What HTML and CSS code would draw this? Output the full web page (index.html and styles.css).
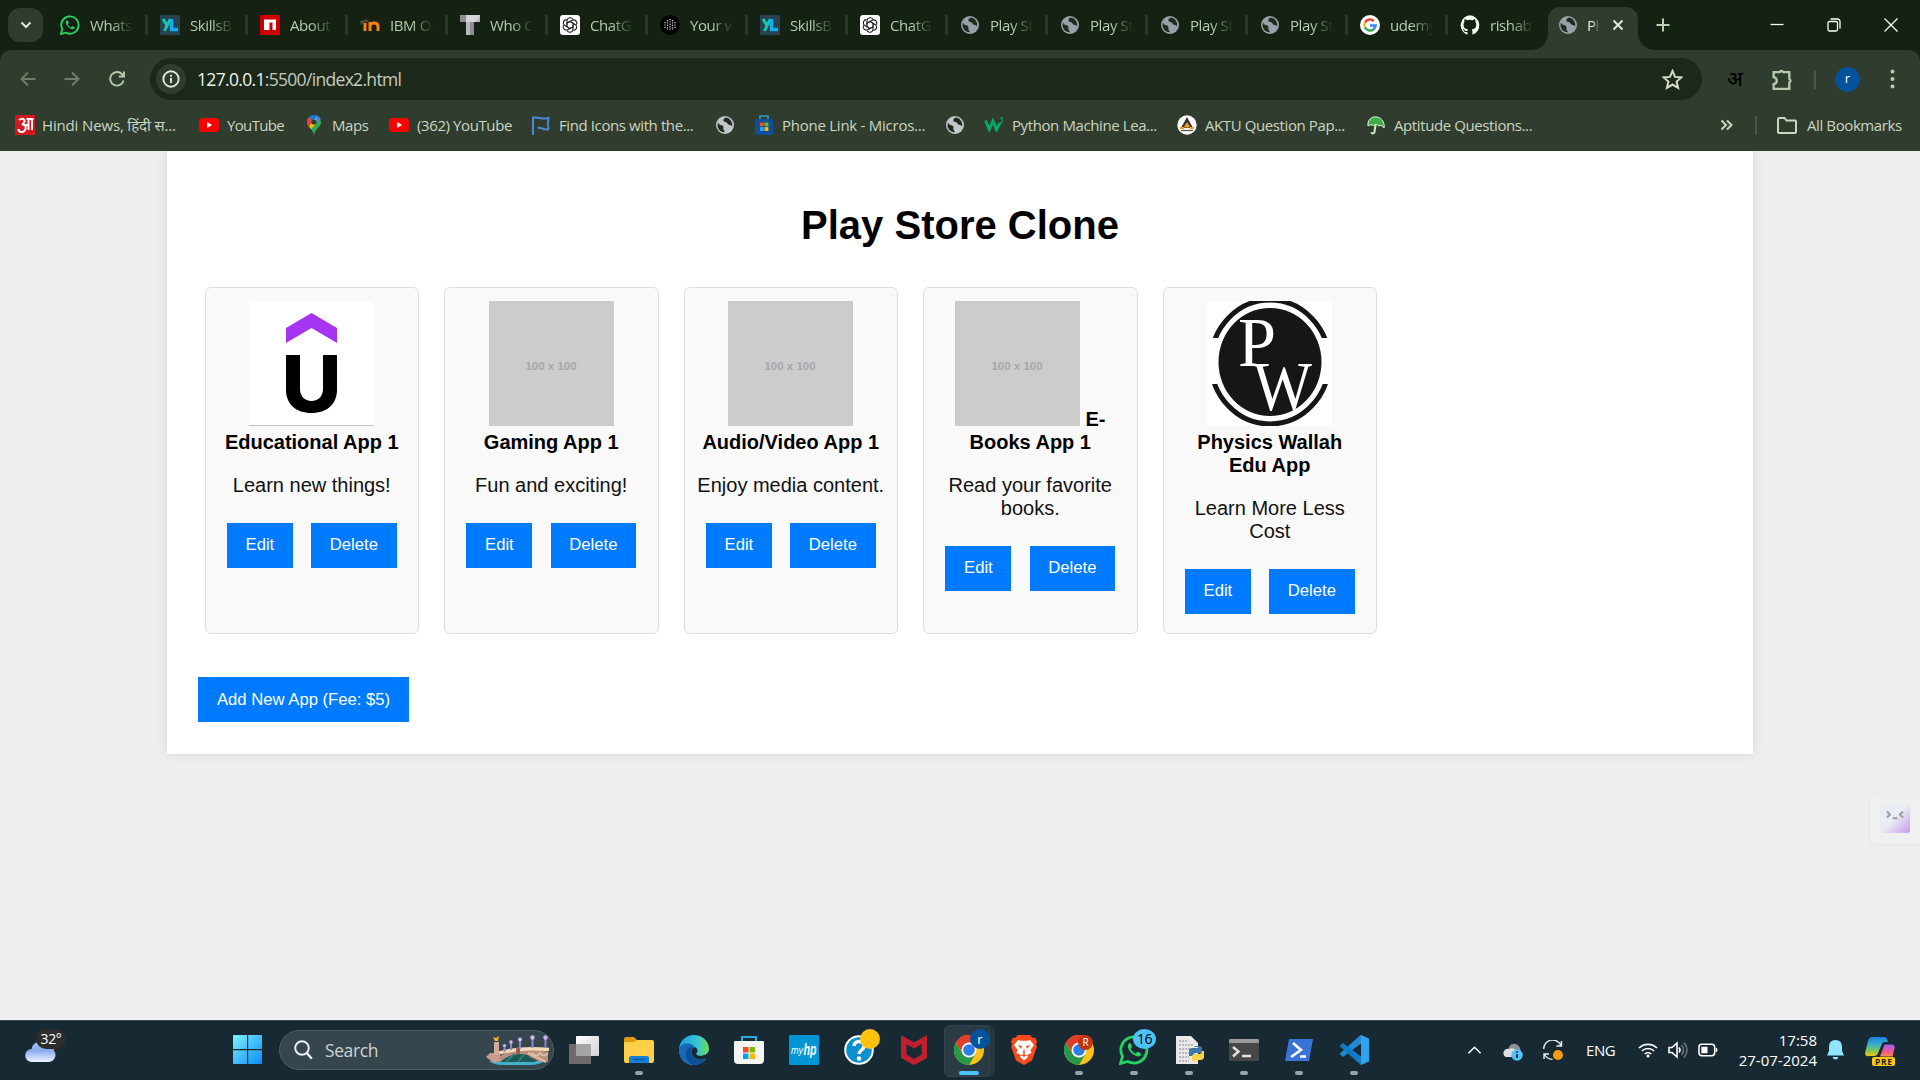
FILE: index.html
```
<!DOCTYPE html>
<html lang="en">
<head>
<meta charset="utf-8">
<title>Play Store Clone</title>
<link rel="stylesheet" href="styles.css">
</head>
<body>
<svg class="defs" aria-hidden="true">
  <defs>
    <symbol id="globe" viewBox="0 0 20 20"><circle cx="10" cy="10" r="9" fill="currentColor"/><path class="cut" d="M3 7.500c1.500 3.500 3.500 2 5 3.500 1.300 1.300-.5 2.500.8 4l1.200 2.200c-4.200.2-7.500-3-7.500-7.200zM10.500 2.600c-2 1.300-3 2.500-1.500 4 1.300 1.200 3 .2 3.500 2 .5 1.700 2.500 1.200 3.500 2l1.200.6c.6-4.500-2.700-8.500-6.700-8.600z"/></symbol>
    <symbol id="whatsapp" viewBox="0 0 30 30"><path d="M1.500 28.500l2-7.200A13 13 0 1 1 8.800 26.500z" fill="none" stroke="#25d366" stroke-width="2.800"/><path d="M10.500 8c-3.500 2.500-.8 7.500 2.500 10.500 3.300 2.900 8 4.500 9 .8.200-1.100-3.200-2.800-3.800-2.400l-1.600 1.700c-2.200-.8-4.300-2.800-5-4.800l1.300-1.800c.3-.7-1-4.100-2.400-4z" fill="#25d366"/></symbol>
    <symbol id="yl" viewBox="0 0 20 20"><rect width="20" height="20" rx="1" fill="#26414f"/><path d="M3 4l4 6.500 3.500-6.500" fill="none" stroke="#12c9b0" stroke-width="3"/><path d="M7.500 9.500L4.500 16" stroke="#12c9b0" stroke-width="2.800"/><path d="M11.500 4v10.500H18" fill="none" stroke="#13aef2" stroke-width="3.300"/></symbol>
    <symbol id="gpt" viewBox="0 0 20 20"><rect width="20" height="20" rx="3" fill="#fff"/><g fill="none" stroke="#202020" stroke-width="1.100"><path id="petal" d="M7 9.800V5.500a3.200 3.200 0 0 1 6-1.100M7 8.200l3.800-2.200"/><use href="#petal" transform="rotate(60 10 10)"/><use href="#petal" transform="rotate(120 10 10)"/><use href="#petal" transform="rotate(180 10 10)"/><use href="#petal" transform="rotate(240 10 10)"/><use href="#petal" transform="rotate(300 10 10)"/></g></symbol>
    <symbol id="youtube" viewBox="0 0 20 20"><rect y="3" width="20" height="14" rx="3.500" fill="#f00"/><path d="M8 7l5.200 3L8 13z" fill="#fff"/></symbol>
    <symbol id="chrome" viewBox="0 0 30 30"><circle cx="15" cy="15" r="15" fill="#fbc116"/><path d="M2 7.500A15 15 0 0 0 15 30l6.500-11.300L15 15 8.500 18.700z" fill="#279847"/><path d="M2 7.500A15 15 0 0 1 28 7.500H15L8.500 18.700z" fill="#e33b2e"/><circle cx="15" cy="15" r="7.500" fill="#fff"/><circle cx="15" cy="15" r="5.800" fill="#2f7de9"/></symbol>
    <linearGradient id="win" x2="1" y2="1"><stop stop-color="#7ff0ff"/><stop offset="1" stop-color="#0a8cf5"/></linearGradient>
    <linearGradient id="edgeA" x2="1"><stop stop-color="#1e9fe0"/><stop offset=".6" stop-color="#35c4d8"/><stop offset="1" stop-color="#6be04f"/></linearGradient>
    <linearGradient id="cloud" x2="0" y2="1"><stop stop-color="#a9c4f5"/><stop offset=".4" stop-color="#86a8ee"/><stop offset="1" stop-color="#eef3ff"/></linearGradient>
    <linearGradient id="copA" x2="0" y2="1"><stop stop-color="#1a7fe0"/><stop offset=".4" stop-color="#35b0c8"/><stop offset=".75" stop-color="#8fc64a"/><stop offset="1" stop-color="#f2c51a"/></linearGradient>
    <linearGradient id="copB" x2="0" y2="1"><stop stop-color="#a65cf0"/><stop offset=".6" stop-color="#f0568c"/><stop offset="1" stop-color="#fb8a4a"/></linearGradient>
    <linearGradient id="tview" x2="1" y2="1"><stop stop-color="#fff"/><stop offset="1" stop-color="#d2d2d2"/></linearGradient>
  </defs>
</svg>

<header class="browser">
  <div class="tabstrip">
    <button class="tab-search" aria-label="Search tabs"><svg width="12" height="8" viewBox="0 0 12 8"><path d="M1.500 1.500L6 6l4.500-4.500" class="ln-bright"/></svg></button>
    <div class="tab"><svg class="fav"><use href="#whatsapp"/></svg><span>WhatsApp</span></div>
    <div class="tab"><svg class="fav"><use href="#yl"/></svg><span>SkillsBuild</span></div>
    <div class="tab"><svg class="fav" viewBox="0 0 20 20"><rect width="20" height="20" fill="#c00"/><path d="M4 4.500h12V15h-3.500V7.500H9.500V15H4z" fill="#fff"/></svg><span>About npm</span></div>
    <div class="tab"><svg class="fav" viewBox="0 0 20 20"><path d="M5 16V8" fill="none" stroke="#f98012" stroke-width="3"/><path d="M10 16V7M10 11c0-4 8-4 8 .5V16" fill="none" stroke="#f98012" stroke-width="3"/><path d="M0 6l7-2 2 2.500-5 1.500-3 2z" fill="#51463b"/></svg><span>IBM Open</span></div>
    <div class="tab"><svg class="fav" viewBox="0 0 20 20"><path d="M0 0h20v7h-6v13H6V7H0z" fill="#b9b9bd"/><path d="M0 0h6v7H0zM10 7h4v13h-4z" fill="#8d8d93"/><path d="M6 0h14l-4 7H6z" fill="#d6d6da"/></svg><span>Who Can</span></div>
    <div class="tab"><svg class="fav"><use href="#gpt"/></svg><span>ChatGPT</span></div>
    <div class="tab"><svg class="fav" viewBox="0 0 20 20"><circle cx="10" cy="10" r="10"/><path d="M10 4v12M7.500 5v10M12.500 5v10M5 7v6M15 7v6" stroke="#ddd" stroke-width="1.200" stroke-dasharray="1.200 1.200"/></svg><span>Your work</span></div>
    <div class="tab"><svg class="fav"><use href="#yl"/></svg><span>SkillsBuild</span></div>
    <div class="tab"><svg class="fav"><use href="#gpt"/></svg><span>ChatGPT</span></div>
    <div class="tab"><svg class="fav globe"><use href="#globe"/></svg><span>Play Store</span></div>
    <div class="tab"><svg class="fav globe"><use href="#globe"/></svg><span>Play Store</span></div>
    <div class="tab"><svg class="fav globe"><use href="#globe"/></svg><span>Play Store</span></div>
    <div class="tab"><svg class="fav globe"><use href="#globe"/></svg><span>Play Store</span></div>
    <div class="tab"><svg class="fav" viewBox="0 0 20 20"><circle cx="10" cy="10" r="10" fill="#fff"/><g fill="none" stroke-width="2.500"><path d="M13.900 6A5.600 5.600 0 0 0 5 7.500" stroke="#ea4335"/><path d="M5 7.500a5.600 5.600 0 0 0 0 5" stroke="#fbbc05"/><path d="M5 12.500a5.600 5.600 0 0 0 8.800 1.500" stroke="#34a853"/><path d="M13.800 14a5.500 5.500 0 0 0 1.800-3.500H10" stroke="#4285f4"/></g></svg><span>udemy logo</span></div>
    <div class="tab last"><svg class="fav" viewBox="0 0 20 20"><path d="M10 .3a10 10 0 0 0-3.200 19.200c.5.100.7-.2.700-.5v-1.900c-2.800.6-3.400-1.200-3.400-1.200-.4-1.100-1.100-1.400-1.100-1.400-.9-.6.1-.6.1-.6 1 .1 1.500 1 1.500 1 .9 1.600 2.400 1.100 2.900.9.100-.7.400-1.100.6-1.400-2.200-.2-4.600-1.100-4.600-4.900 0-1.100.4-2 1-2.700-.1-.2-.4-1.200.1-2.600 0 0 .9-.3 2.800 1a9.600 9.600 0 0 1 5 0c1.900-1.300 2.800-1 2.800-1 .5 1.400.2 2.400.1 2.600.6.700 1 1.600 1 2.700 0 3.800-2.300 4.700-4.600 4.900.4.300.7.900.7 1.900V19c0 .3.200.6.700.5A10 10 0 0 0 10 .3z" fill="#fff"/></svg><span>rishabh</span></div>
    <div class="tab active"><svg class="fav globe"><use href="#globe"/></svg><span>Play</span><svg class="close" viewBox="0 0 12 12"><path d="M1.500 1.500l9 9M10.500 1.500l-9 9" class="ln-bright"/></svg></div>
    <button class="new-tab" aria-label="New tab"><svg width="14" height="14" viewBox="0 0 14 14"><path d="M7 .5v13M.5 7h13" class="ln-green"/></svg></button>
    <div class="window-controls">
      <svg viewBox="0 0 14 14"><path d="M.5 6.500h13" class="ln-win"/></svg>
      <svg viewBox="0 0 14 14"><rect x="1" y="3.500" width="9.500" height="9.500" rx="1.500" class="ln-win"/><path d="M3.500 1h7a2.500 2.500 0 0 1 2.500 2.500v7" class="ln-win"/></svg>
      <svg viewBox="0 0 14 14"><path d="M.5.500l13 13M13.500.5l-13 13" class="ln-win"/></svg>
    </div>
  </div>

  <div class="toolbar">
    <svg class="nav dim" viewBox="0 0 16 16"><path d="M15.500 8H1.500M8 1.500L1.500 8 8 14.500"/></svg>
    <svg class="nav dim" viewBox="0 0 16 16"><path d="M.5 8h14M8 1.500L14.500 8 8 14.500"/></svg>
    <svg class="nav reload" viewBox="0 0 16 16"><path d="M14.600 9.500A6.800 6.800 0 1 1 13 3.200L14.500 5M15 .5v5H9.800"/></svg>
    <div class="omnibox">
      <span class="site-info"><svg width="18" height="18" viewBox="0 0 18 18"><circle cx="9" cy="9" r="7.700" fill="none" stroke="#e2e6dc" stroke-width="1.900"/><path d="M9 8v5M9 4.800v1.900" stroke="#e2e6dc" stroke-width="1.900"/></svg></span>
      <span class="url"><b>127.0.0.1</b>:5500/index2.html</span>
      <svg class="star" viewBox="0 0 20 20"><path d="M10 1.800l2.400 5.700 6.100.5-4.600 4 1.400 6-5.300-3.200L4.700 18l1.400-6-4.600-4 6.100-.5z" fill="none" stroke="#d5dacd" stroke-width="1.900"/></svg>
    </div>
    <span class="ext-hindi">अ</span>
    <svg class="puzzle" viewBox="0 0 22 22"><path d="M2.500 4h5.700a2 2 0 0 1 3.600 0h5.700v6.200a2 2 0 0 1 0 3.600V20h-15v-4.500c4-.8 4-6 0-6.800z"/></svg>
    <i class="vbar"></i>
    <span class="avatar">r</span>
    <svg class="menu-dots" viewBox="0 0 5 20"><circle cx="2.500" cy="2.500" r="2"/><circle cx="2.500" cy="10" r="2"/><circle cx="2.500" cy="17.500" r="2"/></svg>
  </div>

  <nav class="bookmarks">
    <a><svg class="fav" viewBox="0 0 20 20"><rect width="20" height="20" fill="#d8161f"/><path d="M4 5c5-4 8 2 3 4.500 6 0 4 8-.500 7.500C4.500 17 3.500 15.500 3.500 14M9 10h4M13.500 4v11M17 4v11M11.500 4h7" fill="none" stroke="#fff" stroke-width="2"/></svg><span>Hindi News, हिंदी स...</span></a>
    <a><svg class="fav"><use href="#youtube"/></svg><span class="tight">YouTube</span></a>
    <a><svg class="fav" viewBox="0 0 20 20"><path d="M10 0a7 7 0 0 0-7 7c0 5 5.500 6 7 13 1.500-7 7-8 7-13a7 7 0 0 0-7-7z" fill="#34a853"/><path d="M10 0a7 7 0 0 0-5.400 2.500l3.600 3L13 .7A7 7 0 0 0 10 0z" fill="#1a73e8"/><path d="M13 .7L8.200 5.500l4.300 3.200L16.500 4A7 7 0 0 0 13 .7z" fill="#4285f4"/><path d="M4.600 2.500C2 5.500 3 9.500 4.800 11.500l3.700-4.200v-2z" fill="#ea4335"/><path d="M4.800 11.500l7.500-8.500v5l-5 6z" fill="#fbbc04"/><circle cx="10" cy="7" r="2.600" fill="#303c2d"/></svg><span>Maps</span></a>
    <a><svg class="fav"><use href="#youtube"/></svg><span>(362) YouTube</span></a>
    <a><svg class="fav" viewBox="0 0 20 20"><path d="M2 20V1.500M2 3c5-2 8 2 15.500 0-1 4-1 7 0 11-5 2-6-2-11-1" fill="none" stroke="#4b86d8" stroke-width="2"/></svg><span>Find Icons with the...</span></a>
    <a><svg class="fav globe bar"><use href="#globe"/></svg></a>
    <a><svg class="fav" viewBox="0 0 20 20"><path d="M6 5V1h8v4" fill="none" stroke="#2aa0c8" stroke-width="1.600"/><rect x="1" y="4" width="18" height="16" rx="2" fill="#0f4f9c"/><path d="M6 7.500h3.800v3.800H6z" fill="#f25022"/><path d="M10.600 7.500h3.800v3.800h-3.800z" fill="#7fba00"/><path d="M6 12.100h3.800v3.800H6z" fill="#29a8ee"/><path d="M10.600 12.100h3.800v3.800h-3.800z" fill="#ffb900"/></svg><span>Phone Link - Micros...</span></a>
    <a><svg class="fav globe bar"><use href="#globe"/></svg></a>
    <a><svg class="fav" viewBox="0 0 20 20"><path d="M1.500 5.500l3.800 9 3.700-8.500 3.500 8.500L16 8" fill="none" stroke="#04aa6d" stroke-width="3"/><path d="M16 3h3l-1.500 2c2 0 2 3-1.500 2.500" fill="none" stroke="#04aa6d" stroke-width="1"/></svg><span>Python Machine Lea...</span></a>
    <a><svg class="fav" viewBox="0 0 20 20"><circle cx="10" cy="10" r="9.700" fill="#fff"/><path d="M10 2l6 11H4z" fill="#333"/><path d="M10 7l3.500 5.500h-7zM3 12h4v2H3zM13 12h4v2h-4z" fill="#f29a1e"/><path d="M4 15.500h12" stroke="#555" stroke-width="1.300"/></svg><span>AKTU Question Pap...</span></a>
    <a><svg class="fav" viewBox="0 0 20 20"><path d="M2 11C1 5 6 1 11 2c5 1 8 6 7 11-1.500-2.500-3.500-3-5-2-2-2-4-2-5.500-.5-2-1-4-.8-5.500.5z" fill="#3fae49" stroke="#e6f2e2" stroke-width="1"/><path d="M9.500 10l-1 7c-.5 2-3 1.500-3 0" fill="none" stroke="#bfe3b6" stroke-width="2.200"/></svg><span>Aptitude Questions...</span></a>
    <svg class="more" viewBox="0 0 12 12"><path d="M1 1.500L5.500 6 1 10.500M6.500 1.500L11 6l-4.500 4.500"/></svg>
    <i class="vbar"></i>
    <a class="all"><svg class="folder" viewBox="0 0 20 17"><path d="M1 2.500V15q0 1 1 1h16q1 0 1-1V4.500q0-1-1-1H9.500L7.500 1H2Q1 1 1 2.500z"/></svg><span>All Bookmarks</span></a>
  </nav>
</header>

<main class="viewport">
  <div class="container">
    <h1>Play Store Clone</h1>
    <section class="apps">
      <article class="app">
        <svg class="pic" viewBox="0 0 125 125"><rect width="125" height="125" fill="#fff"/><path d="M62.500 12L88 27v15L62.500 27 37 42V27z" fill="#a435f0"/><path d="M37 54h14v34c0 7 4.500 12 11.500 12S74 95 74 88V54h14v35c0 14-10 23-25.500 23S37 103 37 89z"/><path d="M0 124.500h125" stroke="#c4c4c4"/></svg>
        <strong>Educational App 1</strong>
        <p>Learn new things!</p>
        <button>Edit</button> <button>Delete</button>
      </article>
      <article class="app">
        <svg class="pic" viewBox="0 0 125 125"><rect width="125" height="125" fill="#ccc"/><text x="62" y="68.500" class="ph">100 x 100</text></svg>
        <strong>Gaming App 1</strong>
        <p>Fun and exciting!</p>
        <button>Edit</button> <button>Delete</button>
      </article>
      <article class="app">
        <svg class="pic" viewBox="0 0 125 125"><rect width="125" height="125" fill="#ccc"/><text x="62" y="68.500" class="ph">100 x 100</text></svg>
        <strong>Audio/Video App 1</strong>
        <p>Enjoy media content.</p>
        <button>Edit</button> <button>Delete</button>
      </article>
      <article class="app">
        <svg class="pic" viewBox="0 0 125 125"><rect width="125" height="125" fill="#ccc"/><text x="62" y="68.500" class="ph">100 x 100</text></svg>
        <strong>E-Books App 1</strong>
        <p>Read your favorite books.</p>
        <button>Edit</button> <button>Delete</button>
      </article>
      <article class="app">
        <svg class="pic" viewBox="0 0 125 125"><rect width="125" height="125" fill="#fff"/><ellipse cx="63" cy="61" rx="59" ry="62" fill="none" stroke="#161616" stroke-width="5"/><path d="M0 37h125v46H0z" fill="#fff"/><ellipse cx="63" cy="61" rx="51.500" ry="54" fill="#161616"/><text class="pw" x="31" y="65" font-size="70" textLength="38" lengthAdjust="spacingAndGlyphs">P</text><text class="pw" x="46" y="109" font-size="69" textLength="59" lengthAdjust="spacingAndGlyphs">W</text></svg>
        <strong>Physics Wallah Edu App</strong>
        <p>Learn More Less Cost</p>
        <button>Edit</button> <button>Delete</button>
      </article>
    </section>
    <button class="add">Add New App (Fee: $5)</button>
  </div>
  <aside class="assistant"><svg width="30" height="30" viewBox="0 0 30 30"><defs><linearGradient id="face" x2="1" y2="1"><stop offset=".5" stop-color="#e9ecf1"/><stop offset="1" stop-color="#c79af0"/></linearGradient></defs><rect width="30" height="30" rx="3" fill="url(#face)"/><path d="M7 8.500l3 3-3 3M23 8.500l-3 3 3 3M13 14.500q2 2 4 0" fill="none" stroke="#9a9ba6" stroke-width="2"/></svg></aside>
</main>

<footer class="taskbar">
  <div class="weather">
    <svg width="32" height="28" viewBox="0 0 32 28"><circle cx="24" cy="12" r="6" fill="#f07a28"/><path d="M7 27a6.500 6.500 0 0 1-.5-13 8.500 8.500 0 0 1 16.500-1A7 7 0 0 1 24 27z" fill="url(#cloud)"/></svg>
    <span>32°</span>
  </div>
  <div class="dock">
    <svg class="start" viewBox="0 0 29 29"><path d="M0 1q0-1 1-1h13v14H0zM15.200 0H28q1 0 1 1v13H15.200zM0 15.200h14V29H1q-1 0-1-1zM15.200 15.200H29V28q0 1-1 1H15.200z" fill="url(#win)"/></svg>
    <div class="search">
      <svg width="19" height="20" viewBox="0 0 19 20"><circle cx="8" cy="8" r="6.800" fill="none" stroke="#e8ecee" stroke-width="2"/><path d="M12.800 13l5 5.800" stroke="#e8ecee" stroke-width="2.400"/></svg>
      <span>Search</span>
      <svg class="bridge" viewBox="0 0 64 30"><path d="M3 26h56q-6 4-14 4H16Q8 30 3 26z" fill="#3fb2c9"/><path d="M7 27Q28 6 62 17v10h-8Q34 14 14 27z" fill="#b98f7e"/><path d="M14 27Q26 16 42 20l8 7z" fill="#1d5a55"/><path d="M20 27l8-8M32 27l6-8" stroke="#2f8078" stroke-width="2"/><path d="M42 18l18 9M46 18q4 5 8 0q4 5 8 0" fill="none" stroke="#e0bfa4" stroke-width="2"/><path d="M13 18Q34 12 63 14.500" fill="none" stroke="#f2d9b8" stroke-width="3.500"/><rect x="30" y="13" width="4" height="6" rx="1" fill="#9a5b50"/><path d="M0 22l4-4h10v8l-6 2z" fill="#c99a8c"/><path d="M8 7h5v13H8z" fill="#d8a997"/><path d="M7 2l3 1 3-2-1 5H9z" fill="#f0b429"/><path d="M18.500 11v6M25 8v7M34 6v8M46.500 3v10M59.500 3v10" stroke="#8e86c8" stroke-width="2"/><g fill="#c9b8ee"><circle cx="18.500" cy="10.500" r="1.600"/><circle cx="25" cy="7" r="1.800"/><circle cx="34" cy="4.500" r="2"/><circle cx="46.500" cy="2.500" r="2.200"/><circle cx="59.500" cy="2.500" r="2.200"/></g></svg>
    </div>
    <div class="task"><svg viewBox="0 0 30 30"><rect x="0" y="9" width="22" height="20" rx="1" fill="#6e6b6a"/><rect x="7" y="1" width="23" height="20" rx="1" fill="url(#tview)"/><path d="M7 9h15v12H7z" fill="#a5a5a5"/></svg></div>
    <div class="task run"><svg viewBox="0 0 30 30"><path d="M0 4q0-2 2-2h8l4 4v6H0z" fill="#e29a0c"/><path d="M0 8q0-1 1-1l9 0 3-2h15q2 0 2 2v19q0 2-2 2H2q-2 0-2-2z" fill="#ffcf48"/><path d="M5 28v-5q0-2 2-2h16q2 0 2 2v5z" fill="#1280d8"/><path d="M9 24.500h12" stroke="#0b5ea8" stroke-width="1.500"/></svg></div>
    <div class="task"><svg viewBox="0 0 30 30"><path d="M15 0C6 0 0 7 0 15s6 15 14.500 15c5 0 10-2.500 12.500-6.500-5 2.500-13 1.500-14.500-5.500-.5-3 1-5 2-6 3 0 4 2 4 4-.5 2-1.500 2-1 3.500 2 2.500 12.500 1.500 12.500-5.500C30 6 23 0 15 0z" fill="url(#edgeA)"/><path d="M0 15C1 9 6 8 9 8.500c3 0 6 2 7 4-4 0-6 4-5 8 1 5 6 8 15 4-3 4-7 5.500-11.500 5.500C6 30 0 23 0 15z" fill="#1668b8"/><path d="M9 13c-5 6-1 15 5.500 17C22 30 25 27 27 23.500c-5 2.500-13 1.500-14.500-5.500-.4-2.500.3-4 1.500-5.500-1.500-.5-3-.5-5 .5z" fill="#0c4f9a"/></svg></div>
    <div class="task"><svg viewBox="0 0 30 30"><path d="M8 8V2h14v6" fill="none" stroke="#2aa8e0" stroke-width="2"/><path d="M0 7q0-1 1-1h28q1 0 1 1v18q0 4-4 4H4q-4 0-4-4z" fill="#f4f4f4"/><path d="M9 12h5.500v5.500H9z" fill="#f25022"/><path d="M15.500 12H21v5.500h-5.500z" fill="#7fba00"/><path d="M9 18.500h5.500V24H9z" fill="#00a4ef"/><path d="M15.500 18.500H21V24h-5.500z" fill="#ffb900"/></svg></div>
    <div class="task"><svg viewBox="0 0 30 30"><rect width="30" height="30" rx="1" fill="#0096d6"/><text x="2" y="19" class="myhp thin" font-size="11" textLength="12" lengthAdjust="spacingAndGlyphs">my</text><text x="14.500" y="20" class="myhp" font-size="16" textLength="13" lengthAdjust="spacingAndGlyphs">hp</text></svg></div>
    <div class="task"><svg viewBox="0 0 30 30"><circle cx="15" cy="15" r="13.800" fill="#0e8fcf" stroke="#fff" stroke-width="2"/><path d="M10 11c0-6 10-6 10 0 0 4-5 4-5 8" fill="none" stroke="#fff" stroke-width="3.500"/><circle cx="15" cy="23.500" r="2.200" fill="#fff"/></svg><b class="badge yellow"></b></div>
    <div class="task"><svg viewBox="0 0 30 30"><path d="M2 0l13 7.500L28 0v23l-13 7-13-7zM7.500 9v10.500L15 24l7.500-4.500V9L15 13.500z" fill="#c01f2e" fill-rule="evenodd"/></svg></div>
    <div class="task run current"><svg><use href="#chrome"/></svg><b class="badge blue">r</b></div>
    <div class="task"><svg viewBox="0 0 30 30"><path d="M9 0h12l3 3 2-.5 2 4-1 3 1 2-5 14-8 4.500-8-4.500L2 11.500l1-2-1-3 2-4L6 3z" fill="#fb4a1c"/><path d="M9 5l3 .8h6L21 5l4 5-3.500 5 1 3-4.500 2 1 2-4 3.500-4-3.500 1-2-4.500-2 1-3L5 10z" fill="#fff"/><path d="M9 10l4 1-1 3zM21 10l-4 1 1 3zM15 13l1 5-1 1-1-1zM12 20l3-1 3 1-3 2z" fill="#fb4a1c"/></svg></div>
    <div class="task run"><svg><use href="#chrome"/></svg><b class="badge red">R</b></div>
    <div class="task run"><svg><use href="#whatsapp"/></svg><b class="badge sky">16</b></div>
    <div class="task run"><svg viewBox="0 0 30 30"><path d="M2 1h15l7 7v21H2z" fill="#e9e9e9"/><path d="M5 6h9M5 10h14M5 14h14M5 18h10M5 22h10M5 26h10" stroke="#8b8b8b" stroke-dasharray="2 1"/><path d="M21 11h4q3 0 3 3v4h-6q-3 0-3 3h-4v-5q0-3 3-3h6v-1h-4z" fill="#3b78ab"/><path d="M24 27h-3q-3 0-3-3v-2q0-3 3-3h4q3 0 3-3h2v6q0 3-4 3h-5v1h3z" fill="#ffd343"/></svg></div>
    <div class="task run"><svg viewBox="0 0 30 30"><rect y="4" width="30" height="22" rx="1.500" fill="#474747"/><path d="M0 7V5.500Q0 4 1.500 4h27Q30 4 30 5.500V8H0z" fill="#9a9a9a"/><path d="M4 12l5.500 4.500L4 21.500M13 21h9" fill="none" stroke="#e2e2e2" stroke-width="2.400"/></svg></div>
    <div class="task run"><svg viewBox="0 0 30 30"><path d="M5 4h24l-4 22H1z" fill="#3b74d8"/><path d="M9 8l8 7-10 7M16 21.500h6" fill="none" stroke="#fff" stroke-width="2.600"/></svg></div>
    <div class="task run"><svg viewBox="0 0 30 30"><path d="M22 0v8.500L4 22l-3.500-3 21-19z" fill="#1f8ad2"/><path d="M4 8L.5 11 22 30v-8.500z" fill="#0f7cc8"/><path d="M22 0l8 3.500v23L22 30z" fill="#2fa3f0"/></svg></div>
  </div>
  <div class="tray">
    <svg class="t-chev" viewBox="0 0 16 10"><path d="M1.500 8.500L8 2l6.500 6.500"/></svg>
    <svg class="t-cloud" viewBox="0 0 20 18"><path d="M5 10Q5 4 8 1.500 14-1 17 5l1 4z" fill="#8a8f92"/><path d="M3 14q-4-2-2-6 2-3 5-2 5-2 8 2l2 6z" fill="#dcdee0"/><circle cx="14" cy="12" r="5.800" fill="#55c0f7"/><path d="M14 11v4M14 8.300v1.500" stroke="#0b2733" stroke-width="1.600"/></svg>
    <svg class="t-sync" viewBox="0 0 20 20"><path d="M.7 9A9 9 0 0 1 18 5.500M18.500 1v5h-5M1 19v-5h5M1.500 14.500A9 9 0 0 0 9.500 19.300" fill="none" stroke="#e8ecee" stroke-width="1.400"/><circle cx="15" cy="15" r="5" fill="#ff9a0c"/></svg>
    <span class="lang">ENG</span>
    <svg class="t-wifi" viewBox="0 0 20 16"><path d="M1 6a13 13 0 0 1 18 0M3.800 9a9 9 0 0 1 12.400 0M6.700 12a5 5 0 0 1 6.600 0"/><circle class="dot" cx="10" cy="14" r="1.500"/></svg>
    <svg class="t-vol" viewBox="0 0 20 18"><path d="M1 6.500v5h3l5 4.500V2L4 6.500z"/><path d="M11 6.500q2 2.500 0 5"/><path d="M13.500 4q4 5 0 10M16 1.500q6 7.500 0 15" opacity=".35"/></svg>
    <svg class="t-bat" viewBox="0 0 21 14"><rect x="1" y="1" width="16.500" height="12" rx="3"/><path class="dot" d="M3.500 3.500h6.500v7H3.500zM18.500 4.500q2 .5 2 2.500t-2 2.500z"/></svg>
    <div class="clock"><span>17:58</span><span>27-07-2024</span></div>
    <svg class="t-bell" viewBox="0 0 17 20"><path d="M8.500 0Q15 0 15 7v4l2 4.500H0L2 11V7Q2 0 8.500 0zM5.500 17h6q-1 2.500-3 2.500t-3-2.500z" fill="#8fe6ff"/></svg>
    <svg class="t-copilot" viewBox="0 0 30 29"><path d="M7 0h12q3 0 4 5l-3 0q-3 0-4 4l-3 7q-1 3-4 3H4Q-1 20 .5 14L3 4Q4 0 7 0z" fill="url(#copA)"/><path d="M19.500 7.500h7q3.500 0 3 4l-2 8H15z" fill="url(#copB)"/><rect x="7" y="20" width="23" height="9" rx="2" fill="#fdc70a"/><text x="10" y="27.500" class="pre" textLength="17">PRE</text></svg>
  </div>
</footer>
</body>
</html>
```
FILE: styles.css
```
* { box-sizing: border-box; }
body {
  margin: 0;
  width: 1920px;
  height: 1080px;
  overflow: hidden;
  display: flex;
  flex-direction: column;
  font-family: "Open Sans", "Noto Sans", sans-serif;
}
svg { flex: none; }
button { border: 0; font: inherit; }
.defs { position: absolute; width: 0; height: 0; }

/* browser chrome */
.browser { height: 151px; background: #152213; color: #d0dcc8; font-size: 15px; }
.tabstrip { display: flex; align-items: center; height: 50px; padding-left: 8px; }
.tab-search { width: 35px; height: 34px; border-radius: 12px; background: #303c2d; display: grid; place-items: center; padding: 0; margin-right: 5px; }
.ln-bright { fill: none; stroke: #e3e9de; stroke-width: 2; }
.ln-green { fill: none; stroke: #b9d0b2; stroke-width: 2; }
.ln-win { fill: none; stroke: #fff; stroke-width: 1.300; }
.tab { width: 100px; height: 20px; display: flex; align-items: center; padding-left: 12px; border-right: 3px solid #2b3928; flex: none; color: #b7cbae; }
.tab.last { border-color: transparent; }
.tab span { width: 43px; margin-left: 10px; overflow: hidden; white-space: nowrap; letter-spacing: -.4px; -webkit-mask-image: linear-gradient(90deg, #000 50%, transparent); mask-image: linear-gradient(90deg, #000 50%, transparent); }
.fav { width: 20px; height: 20px; }
.globe { color: #9aa0a9; }
.cut { fill: #202c1e; }
.globe.bar { color: #c3c6cb; }
.tab.active { position: relative; width: 90px; height: 43px; margin-top: 7px; border: 0; border-radius: 12px 12px 0 0; background: #303c2d; color: #e3e9de; padding: 0 0 7px 10px; }
.tab.active::before, .tab.active::after { content: ""; position: absolute; bottom: 0; width: 16px; height: 16px; }
.tab.active::before { left: -16px; background: radial-gradient(circle at 0 0, transparent 15.500px, #303c2d 16px); }
.tab.active::after { right: -16px; background: radial-gradient(circle at 100% 0, transparent 15.500px, #303c2d 16px); }
.tab.active span { width: 12px; margin-left: 9px; }
.close { width: 12px; height: 12px; margin-left: 13px; }
.new-tab { width: 50px; padding: 0; background: none; display: grid; place-items: center; }
.window-controls { display: flex; margin-left: auto; gap: 43px; padding-right: 22px; }
.window-controls svg { width: 14px; height: 14px; }

.toolbar { display: flex; align-items: center; height: 50px; padding: 8px 25px 0 20px; border-radius: 11px 11px 0 0; background: #303c2d; }
.nav { width: 16px; height: 16px; margin-right: 28px; fill: none; stroke: #b7cbae; stroke-width: 1.900; }
.nav.dim { stroke: #6f7d6a; }
.nav.reload { margin: 0 25px 0 1px; }
.omnibox { display: flex; align-items: center; width: 1552px; height: 42px; border-radius: 21px; background: #1c291a; padding: 0 19px 0 6px; flex: none; }
.site-info { width: 30px; height: 30px; border-radius: 50%; background: #303c2d; display: grid; place-items: center; margin-right: 11px; }
.url { font-size: 17.500px; letter-spacing: -.68px; color: #c5ccbf; }
.url b { font-weight: 400; color: #f0f3ec; }
.star { width: 21px; height: 21px; margin-left: auto; }
.ext-hindi { width: 20px; margin-left: 23px; color: #000; font-size: 20px; font-weight: 500; text-align: center; line-height: 24px; }
.puzzle { width: 23px; height: 23px; margin-left: 26px; fill: none; stroke: #b7cbae; stroke-width: 2.200; }
.vbar { width: 2px; height: 19px; background: #485845; margin-left: 20px; }
.avatar { width: 25px; height: 25px; margin-left: auto; border-radius: 50%; background: #04529c; color: #fff; font-size: 13px; line-height: 23px; text-align: center; }
.menu-dots { width: 5px; height: 20px; margin-left: 30px; fill: #b7cbae; }

.bookmarks { display: flex; align-items: center; height: 51px; padding: 0 0 1px 15px; background: #303c2d; white-space: nowrap; color: #cbd5c4; letter-spacing: -.4px; }
.bookmarks a { display: flex; align-items: center; gap: 8px; flex: none; }
.bookmarks a span { padding-bottom: 1px; }
.bookmarks .tight { letter-spacing: -.65px; }
.bookmarks a:nth-of-type(1) { width: 184px; gap: 7px; letter-spacing: -.15px; }
.bookmarks a:nth-of-type(2) { width: 105px; }
.bookmarks a:nth-of-type(3) { width: 85px; }
.bookmarks a:nth-of-type(4) { width: 142px; }
.bookmarks a:nth-of-type(5) { width: 184px; }
.bookmarks a:nth-of-type(6), .bookmarks a:nth-of-type(8) { width: 39px; }
.bookmarks a:nth-of-type(7) { width: 191px; letter-spacing: -.25px; }
.bookmarks a:nth-of-type(9) { width: 193px; }
.bookmarks a:nth-of-type(10) { width: 189px; }
.more { width: 13px; height: 12px; margin-left: auto; fill: none; stroke: #cbd5c4; stroke-width: 2; }
.bookmarks .vbar { margin-left: 22px; }
.bookmarks .all { margin-left: 20px; gap: 10px; width: 143px; }
.folder { width: 20px; height: 17px; fill: none; stroke: #cbd5c4; stroke-width: 2; }

/* page */
.viewport { position: relative; height: 869px; background: #efefef; overflow: hidden; font-family: "Liberation Sans", Arial, sans-serif; font-size: 20px; line-height: 23px; }
.container { width: 1586px; margin: 0 auto; padding: 24.500px 25px 26px; background: #fff; box-shadow: 0 0 12.500px rgba(0, 0, 0, .1); }
h1 { margin: 26.500px 0; font-size: 40px; line-height: 46px; text-align: center; }
.apps { display: flex; gap: 25px; padding: 12.500px; }
.app { width: 214.500px; padding: 12.500px; border: 1px solid #ddd; border-radius: 6px; background: #f9f9f9; text-align: center; }
.pic { width: 125px; height: 125px; }
.app p { margin: 20px 0; color: #111; }
.app button, .add { margin: 6.250px; padding: 12.500px 18.750px; height: 45px; background: #007bff; color: #fff; font-size: 16.670px; line-height: 19px; }
.app button { padding: 11.500px 18.750px 13.500px; }
.add { display: block; margin-top: 31px; }
.ph { font: bold 11.500px "Liberation Sans", sans-serif; fill: #a8a8a8; text-anchor: middle; }
.pw { font-family: "Liberation Serif", serif; fill: #fff; }
.assistant { position: absolute; right: 0; top: 642px; width: 50px; height: 51px; border-radius: 8px 0 0 8px; background: #f0f0f0; box-shadow: 0 1px 4px rgba(0, 0, 0, .05); padding: 10px; }
.assistant svg { display: block; }

/* taskbar */
.taskbar { display: flex; align-items: flex-start; height: 60px; background: #172a34; border-top: 1px solid #3a4a52; color: #fff; }
.weather { position: relative; width: 233px; height: 59px; padding: 14px 0 0 25px; }
.weather span { position: absolute; left: 36px; top: 8px; width: 30px; height: 20px; border-radius: 10px; background: #2c2c2c; font-size: 14px; line-height: 20px; text-align: center; letter-spacing: -.4px; }
.dock { display: flex; align-items: center; height: 57px; }
.start { width: 29px; height: 29px; margin-right: 17px; }
.search { display: flex; align-items: center; width: 275px; height: 40px; margin-right: 2px; border: 1px solid #4e5d65; border-radius: 20px; background: #36464f; padding-left: 14px; font-size: 17.500px; color: #ccd2d5; letter-spacing: -.4px; }
.search span { margin-left: 12px; flex: 1; }
.bridge { width: 64px; height: 30px; margin-right: 3px; }
.task { position: relative; width: 55px; height: 50px; display: grid; place-items: center; }
.task > svg { position: relative; width: 30px; height: 30px; }
.task.run::after { content: ""; position: absolute; left: 24px; bottom: 0; width: 8px; height: 4px; border-radius: 2px; background: #9aa3a8; }
.task.current::before { content: ""; position: absolute; left: 3px; top: 0; width: 44px; height: 50px; border: 1px solid #34454e; border-radius: 6px; background: #2a3b45; box-shadow: 5px 0 0 #25363f; }
.task.current::after { left: 18px; width: 20px; background: #4cc2ff; }
.badge { position: absolute; left: 29px; top: 4px; width: 20px; height: 20px; border-radius: 50%; font-size: 13px; font-weight: 400; line-height: 20px; text-align: center; }
.yellow { background: #ffc20e; }
.blue { background: #04529c; }
.red { left: 27px; top: 10px; width: 15px; height: 15px; background: #c03410; font-size: 10px; line-height: 15px; }
.sky { left: 27px; width: 23px; background: #4cc2ff; color: #000; font-size: 14px; letter-spacing: -.5px; }
.myhp { fill: #fff; font-family: "Liberation Sans", sans-serif; font-style: italic; font-weight: bold; }
.myhp.thin { font-weight: normal; }
.tray { display: flex; align-items: center; height: 58px; margin-left: auto; padding-right: 25px; font-size: 15px; }
.tray svg { fill: none; stroke: #fff; stroke-width: 1.600; }
.tray .dot { fill: #fff; stroke: none; }
.t-chev { width: 15px; height: 10px; stroke-width: 2; }
.t-cloud { width: 20px; height: 18px; margin: 3px 0 0 21px; }
.tray .t-cloud, .tray .t-sync, .tray .t-bell, .tray .t-copilot { stroke: none; }
.t-sync { width: 20px; height: 20px; margin-left: 20px; }
.lang { width: 30px; margin-left: 23px; letter-spacing: -.4px; }
.t-wifi { width: 20px; height: 16px; margin-left: 22px; }
.t-vol { width: 20px; height: 18px; margin-left: 10px; }
.t-bat { width: 20px; height: 14px; margin-left: 10px; }
.clock { display: flex; flex-direction: column; align-items: flex-end; width: 99px; padding-bottom: 1px; line-height: 20px; letter-spacing: 0; white-space: nowrap; }
.t-bell { width: 17px; height: 20px; margin-left: 10px; }
.t-copilot { width: 30px; height: 29px; margin: 3px 0 0 21px; }
.pre { font: bold 8.500px "Open Sans", sans-serif; fill: #222; }
```
